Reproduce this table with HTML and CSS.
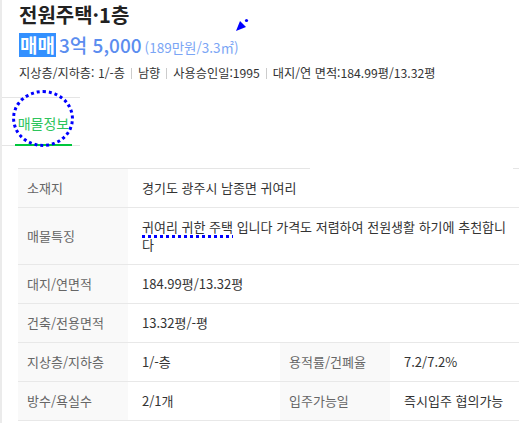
FILE: index.html
```html
<!DOCTYPE html>
<html lang="ko">
<head>
    <meta charset="UTF-8">
    <meta name="viewport" content="width=device-width, initial-scale=1.0">
    <title>전원주택 매물정보</title>
    <link rel="stylesheet" href="styles.css">
</head>
<body>
    <div class="page">
        <div class="summary">
            <h1 class="title">전원주택·1층</h1>
            <div class="price-row">
                <span class="deal">매매</span>
                <span class="price">3억 5,000</span>
                <span class="unit-price">(189만원/3.3㎡)</span>
                <svg class="pointer" width="14" height="14" viewBox="0 0 14 14">
                    <polygon points="1,13 5,3 11,9" fill="#0000ff"/>
                    <circle cx="11.5" cy="2.5" r="1.6" fill="#0000ff"/>
                </svg>
            </div>
            <div class="info">
                <span>지상층/지하층: 1/-층</span>
                <span class="sep"></span>
                <span>남향</span>
                <span class="sep"></span>
                <span>사용승인일:1995</span>
                <span class="sep"></span>
                <span>대지/연 면적:184.99평/13.32평</span>
            </div>
        </div>

        <div class="tabs">
            <div class="tab active">매물정보</div>
            <div class="tab-mark"></div>
        </div>

        <div class="detail">
            <div class="row">
                <div class="label">소재지</div>
                <div class="value wide">경기도 광주시 남종면 귀여리</div>
            </div>
            <div class="row">
                <div class="label">매물특징</div>
                <div class="value wide"><span class="marked">귀여리 귀한 주택</span> 입니다 가격도 저렴하여 전원생활 하기에 추천합니다</div>
            </div>
            <div class="row">
                <div class="label">대지/연면적</div>
                <div class="value wide">184.99평/13.32평</div>
            </div>
            <div class="row">
                <div class="label">건축/전용면적</div>
                <div class="value wide">13.32평/-평</div>
            </div>
            <div class="row">
                <div class="label">지상층/지하층</div>
                <div class="value">1/-층</div>
                <div class="label">용적률/건폐율</div>
                <div class="value">7.2/7.2%</div>
            </div>
            <div class="row">
                <div class="label">방수/욕실수</div>
                <div class="value">2/1개</div>
                <div class="label">입주가능일</div>
                <div class="value">즉시입주 협의가능</div>
            </div>
        </div>
    </div>
</body>
</html>
```

FILE: styles.css
```css
html, body {
    margin: 0;
    height: 100%;
    overflow: hidden;
    background: #fff;
}

body {
    font-family: "Noto Sans CJK KR", "Noto Sans", sans-serif;
    color: #333;
}

.page {
    border-left: 2px solid #ebebeb;
    min-height: 100%;
    box-sizing: border-box;
}

.summary {
    padding-left: 17px;
}

.title {
    margin: 0;
    padding-top: 1px;
    font-size: 20px;
    line-height: 28px;
    font-weight: 700;
    color: #222;
}

.price-row {
    position: relative;
    display: flex;
    align-items: baseline;
    height: 26px;
    margin-top: 2px;
}

.deal {
    background: #3390ff;
    color: #fff;
    font-size: 19px;
    font-weight: 700;
    line-height: 24px;
    padding: 0 1px;
}

.price {
    color: #5b8def;
    font-size: 19px;
    font-weight: 500;
    margin-left: 3px;
}

.unit-price {
    color: #7aa5f5;
    font-size: 13.5px;
    margin-left: 3px;
}

.pointer {
    position: absolute;
    left: 216px;
    top: -13px;
}

.info {
    display: flex;
    align-items: center;
    gap: 6px;
    margin-top: 7px;
    font-size: 12.2px;
    line-height: 18px;
    color: #333;
}

.sep {
    width: 1px;
    height: 11px;
    background: #ccc;
}

.tabs {
    position: relative;
    width: 78px;
    height: 47px;
    margin-top: 15px;
    border-top: 1px solid #e5e5e5;
    border-bottom: 1px solid #e5e5e5;
}

.tab {
    position: absolute;
    left: 13px;
    bottom: -1px;
    width: 57px;
    height: 100%;
    line-height: 44px;
    text-align: center;
    font-size: 14px;
    color: #2ec45c;
    border-bottom: 2px solid #00c73c;
    box-sizing: border-box;
    padding-top: 2px;
}

.tab-mark {
    position: absolute;
    left: 10px;
    top: -8px;
    width: 56px;
    height: 51px;
    border: 3px dotted #0000ff;
    border-radius: 50%;
}

.detail {
    width: 508px;
    margin: 22px 0 0 16px;
    font-size: 13px;
    line-height: 18px;
    background: linear-gradient(to right, #e5e5e5 292px, #fff 292px, #fff 495px, #e5e5e5 495px) top / 100% 1px no-repeat;
    padding-top: 1px;
}

.row {
    display: grid;
    grid-template-columns: 110px 152px 110px 1fr;
    border-bottom: 1px solid #e8e8e8;
}

.label {
    background: #f9f9f9;
    color: #666;
    padding: 10px 9px;
    display: flex;
    align-items: center;
}

.value {
    padding: 10px 14px;
    color: #333;
    display: flex;
    align-items: center;
}

.value.wide {
    grid-column: 2 / 5;
    display: block;
    align-self: center;
}

.marked {
    text-decoration: underline dotted #0000ff;
    text-decoration-thickness: 3px;
    text-underline-offset: 3px;
}
```
